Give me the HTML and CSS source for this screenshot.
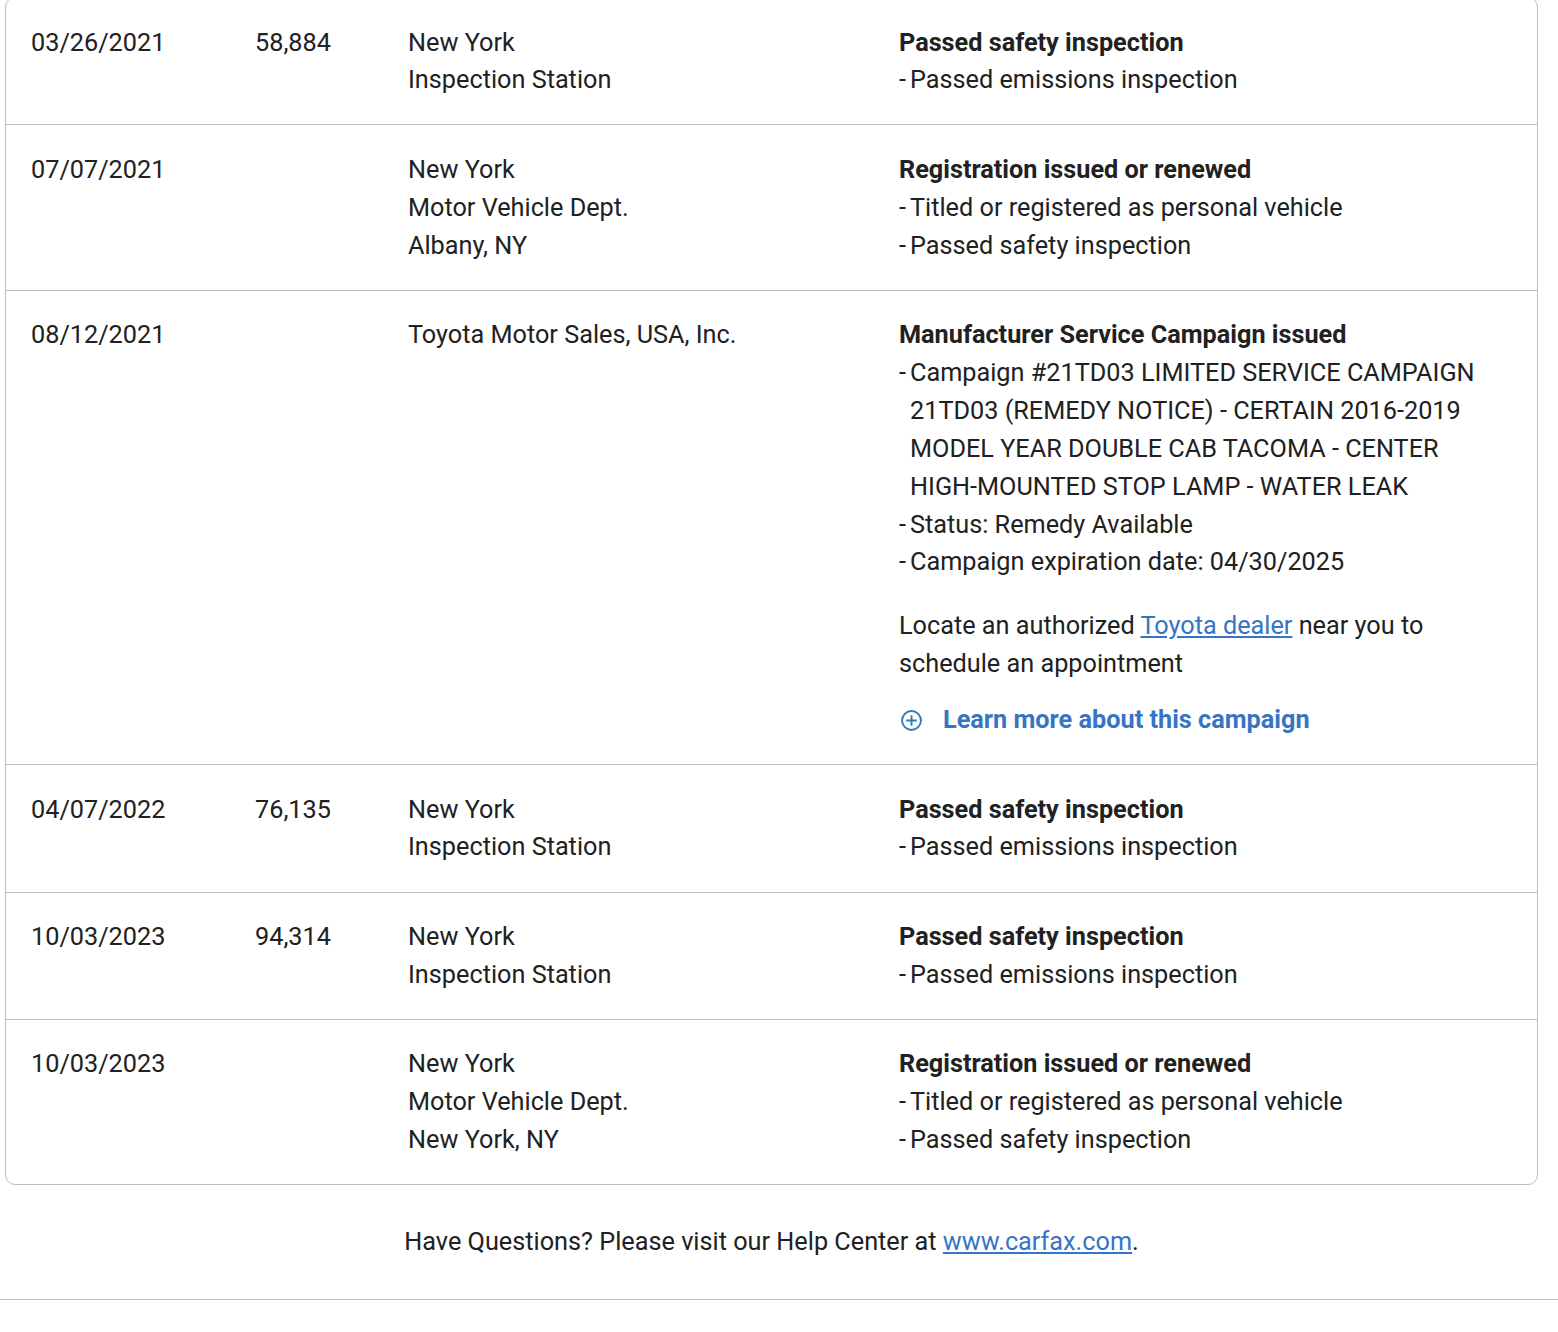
FILE: index.html
```html
<!DOCTYPE html>
<html lang="en">
<head>
<meta charset="utf-8">
<title>Vehicle history</title>
<link rel="stylesheet" href="styles.css">
</head>
<body>
<main class="page">
  <section class="card">
    <div class="row">
      <div>03/26/2021</div>
      <div>58,884</div>
      <div><div>New York</div><div>Inspection Station</div></div>
      <div>
        <div class="title">Passed safety inspection</div>
        <ul class="list"><li>Passed emissions inspection</li></ul>
      </div>
    </div>
    <div class="row">
      <div>07/07/2021</div>
      <div></div>
      <div><div>New York</div><div>Motor Vehicle Dept.</div><div>Albany, NY</div></div>
      <div>
        <div class="title">Registration issued or renewed</div>
        <ul class="list"><li>Titled or registered as personal vehicle</li><li>Passed safety inspection</li></ul>
      </div>
    </div>
    <div class="row">
      <div>08/12/2021</div>
      <div></div>
      <div>Toyota Motor Sales, USA, Inc.</div>
      <div>
        <div class="title">Manufacturer Service Campaign issued</div>
        <ul class="list">
          <li>Campaign #21TD03 LIMITED SERVICE CAMPAIGN 21TD03 (REMEDY NOTICE) - CERTAIN 2016-2019 MODEL YEAR DOUBLE CAB TACOMA - CENTER HIGH-MOUNTED STOP LAMP - WATER LEAK</li>
          <li>Status: Remedy Available</li>
          <li>Campaign expiration date: 04/30/2025</li>
        </ul>
        <p class="locate">Locate an authorized <a href="#">Toyota dealer</a> near you to schedule an appointment</p>
        <a class="more" href="#">
          <svg class="more-icon" viewBox="0 0 22 22" aria-hidden="true"><circle cx="11" cy="11" r="9.9"/><path d="M11 5.5v11M5.5 11h11"/></svg>
          <span>Learn more about this campaign</span>
        </a>
      </div>
    </div>
    <div class="row">
      <div>04/07/2022</div>
      <div>76,135</div>
      <div><div>New York</div><div>Inspection Station</div></div>
      <div>
        <div class="title">Passed safety inspection</div>
        <ul class="list"><li>Passed emissions inspection</li></ul>
      </div>
    </div>
    <div class="row">
      <div>10/03/2023</div>
      <div>94,314</div>
      <div><div>New York</div><div>Inspection Station</div></div>
      <div>
        <div class="title">Passed safety inspection</div>
        <ul class="list"><li>Passed emissions inspection</li></ul>
      </div>
    </div>
    <div class="row">
      <div>10/03/2023</div>
      <div></div>
      <div><div>New York</div><div>Motor Vehicle Dept.</div><div>New York, NY</div></div>
      <div>
        <div class="title">Registration issued or renewed</div>
        <ul class="list"><li>Titled or registered as personal vehicle</li><li>Passed safety inspection</li></ul>
      </div>
    </div>
  </section>
  <footer class="footer">Have Questions? Please visit our Help Center at <a href="#">www.carfax.com</a>.</footer>
</main>
</body>
</html>
```
FILE: styles.css
```css
* { box-sizing: border-box; }
html, body { margin: 0; padding: 0; background: #fff; }
body {
  font-family: Roboto, "Liberation Sans", sans-serif;
  font-size: 25.25px;
  line-height: 37.9px;
  color: #212121;
  overflow: hidden;
}
.page { height: 1332px; overflow: hidden; }
.card {
  margin: -2.85px 20px 0 5px;
  border: 1px solid #bdbdbd;
  border-radius: 10px;
}
.row {
  display: grid;
  grid-template-columns: 224px 153px 491px 1fr;
  padding: 25.38px 45px 25.12px 25px;
}
.row + .row { border-top: 1px solid #bdbdbd; }
.title { font-weight: 700; }
.list { list-style: none; margin: 0; padding: 0; }
.list li { position: relative; padding-left: 11px; }
.list li::before { content: "-"; position: absolute; left: 0; top: 0; }
.locate { margin: 26px 0 18px; }
a { color: #3674c4; }
.more {
  display: flex;
  align-items: center;
  gap: 21px;
  font-weight: 700;
  text-decoration: none;
}
.more-icon {
  width: 21px;
  height: 21px;
  margin-left: 2px;
  fill: none;
  stroke: #3674c4;
  stroke-width: 2;
}
.footer {
  margin-top: 38px;
  height: 77px;
  border-bottom: 1px solid #bdbdbd;
  text-align: center;
  padding-right: 15px;
}
```
